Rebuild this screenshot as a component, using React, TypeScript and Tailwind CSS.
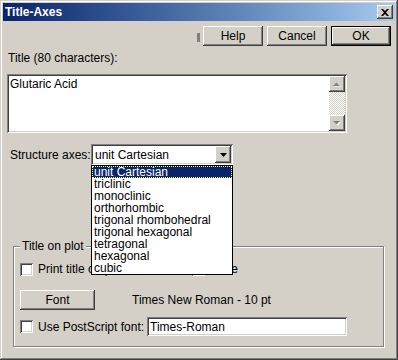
import React from 'react';

const raised =
  'bg-[#d4d0c8] shadow-[inset_-1px_-1px_#404040,inset_1px_1px_#ffffff,inset_-2px_-2px_#808080,inset_2px_2px_#d4d0c8]';
const sunken =
  'bg-white shadow-[inset_1px_1px_#808080,inset_-1px_-1px_#ffffff,inset_2px_2px_#404040,inset_-2px_-2px_#d4d0c8]';

const structures = [
  'unit Cartesian',
  'triclinic',
  'monoclinic',
  'orthorhombic',
  'trigonal rhombohedral',
  'trigonal hexagonal',
  'tetragonal',
  'hexagonal',
  'cubic',
];

const Checkbox: React.FC<{ checked?: boolean }> = ({ checked }) => (
  <div className={`w-[13px] h-[13px] shrink-0 flex items-center justify-center ${sunken}`}>
    {checked && (
      <svg width="7" height="7" viewBox="0 0 7 7">
        <path d="M0 2h1v1h1v1h1V3h1V2h1V1h1V0h1v3H6v1H5v1H4v1H3v1H2V6H1V5H0z" fill="#000" />
      </svg>
    )}
  </div>
);

const Button: React.FC<{ label: string; isDefault?: boolean; className?: string }> = ({ label, isDefault, className }) =>
  isDefault ? (
    <div className={`border border-black flex ${className ?? ''}`}>
      <div className={`flex-1 flex items-center justify-center ${raised}`}>{label}</div>
    </div>
  ) : (
    <div className={`flex items-center justify-center ${raised} ${className ?? ''}`}>{label}</div>
  );

const ScrollArrow: React.FC<{ down?: boolean }> = ({ down }) => (
  <div className={`w-[16px] h-[16px] flex items-center justify-center ${raised}`}>
    <svg width="8" height="5" viewBox="0 0 8 5">
      {down ? (
        <>
          <path d="M1 1h7L4.5 4.5z" fill="#ffffff" />
          <path d="M0 0h7L3.5 3.5z" fill="#808080" />
        </>
      ) : (
        <>
          <path d="M1 4.5h7L4.5 1z" fill="#ffffff" />
          <path d="M0 4h7L3.5 0.5z" fill="#808080" />
        </>
      )}
    </svg>
  </div>
);

export default function App() {
  return (
    <div
      className="w-[398px] h-[360px] bg-[#d4d0c8] p-[3px] flex flex-col text-[12px] text-black shadow-[inset_-1px_-1px_#404040,inset_1px_1px_#d4d0c8,inset_-2px_-2px_#808080,inset_2px_2px_#ffffff]"
      style={{ fontFamily: '"Liberation Sans", Arial, sans-serif' }}
    >
      {/* title bar */}
      <div className="h-[18px] shrink-0 flex items-center justify-between pl-[2px] pr-[2px] bg-gradient-to-r from-[#0a246a] to-[#a6caf0]">
        <span className="text-white font-bold text-[12px] leading-[14px]">Title-Axes</span>
        <div className={`w-[16px] h-[14px] flex items-center justify-center ${raised}`}>
          <svg width="8" height="7" viewBox="0 0 8 7">
            <path d="M0 0h2l2 2 2-2h2L5 3.5 8 7H6L4 5 2 7H0l3-3.5z" fill="#000" />
          </svg>
        </div>
      </div>

      {/* top buttons */}
      <div className="flex justify-end mt-[5px] mr-[4px] h-[20px]">
        <div className="w-[3px] h-[9px] mt-[7px] bg-[#808080] mr-[3px]" />
        <Button label="Help" className="w-[60px] h-[20px]" />
        <Button label="Cancel" className="w-[60px] h-[20px] ml-[4px]" />
        <Button label="OK" isDefault className="w-[60px] h-[20px] ml-[4px]" />
      </div>

      <div className="mt-[5px] ml-[5px] leading-[14px]">Title (80 characters):</div>

      {/* title text area */}
      <div className={`mt-[9px] ml-[4px] w-[340px] h-[59px] flex p-[2px] ${sunken}`}>
        <div className="flex-1 pl-[1px] pt-[2px] leading-[12px]">Glutaric Acid</div>
        <div className="w-[16px] flex flex-col">
          <ScrollArrow />
          <div className="flex-1 bg-[repeating-conic-gradient(#d4d0c8_0%_25%,#ffffff_0%_50%)] bg-[length:2px_2px]" />
          <ScrollArrow down />
        </div>
      </div>

      {/* structure axes */}
      <div className="flex items-center mt-[11px] ml-[7px] relative z-10">
        <span className="w-[81px] leading-[14px]">Structure axes:</span>
        <div className="relative">
          <div className={`w-[142px] h-[21px] flex items-center p-[2px] ${sunken}`}>
            <span className="flex-1 pl-[2px]">unit Cartesian</span>
            <div className={`w-[16px] h-[17px] flex items-center justify-center ${raised}`}>
              <svg width="7" height="4" viewBox="0 0 7 4">
                <path d="M0 0h7L3.5 4z" fill="#000" />
              </svg>
            </div>
          </div>
          <div className="absolute left-0 top-full w-[142px] bg-white border border-black">
            {structures.map((s, i) => (
              <div
                key={s}
                className={`h-[12px] leading-[12px] pl-[2px] ${
                  i === 0 ? 'bg-[#0a246a] text-white outline-1 outline-dotted outline-[#ffff80] -outline-offset-1' : ''
                }`}
              >
                {s}
              </div>
            ))}
          </div>
        </div>
      </div>

      {/* title on plot group */}
      <div className="mt-[81px] ml-[10px] w-[371px] h-[101px] border border-[#808080] shadow-[1px_1px_0_#ffffff,inset_1px_1px_0_#ffffff] flex flex-col">
        <span className="self-start -mt-[8px] ml-[6px] px-[2px] bg-[#d4d0c8] leading-[14px]">Title on plot</span>
        <div className="flex items-center mt-[7px] ml-[6px]">
          <Checkbox />
          <span className="ml-[5px] w-[154px]">Print title on plot</span>
          <Checkbox checked />
          <span className="ml-[3px]">Scale</span>
        </div>
        <div className="flex items-center mt-[12px] ml-[6px]">
          <Button label="Font" className="w-[75px] h-[20px]" />
          <span className="ml-[37px]">Times New Roman - 10 pt</span>
        </div>
        <div className="flex items-center mt-[7px] ml-[6px]">
          <Checkbox />
          <span className="ml-[5px] w-[109px]">Use PostScript font:</span>
          <div className={`w-[200px] h-[19px] flex items-center pl-[3px] ${sunken}`}>Times-Roman</div>
        </div>
      </div>
    </div>
  );
}
